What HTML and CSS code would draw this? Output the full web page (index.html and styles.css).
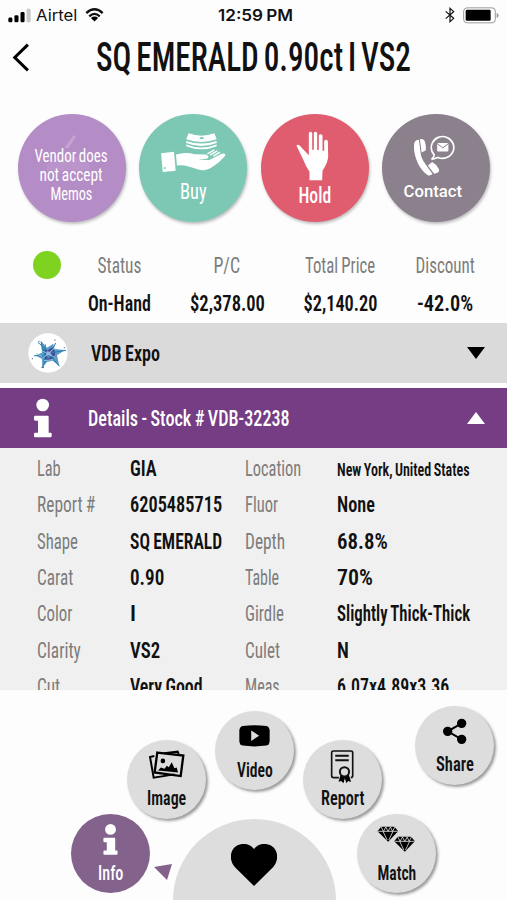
FILE: index.html
```html
<!DOCTYPE html>
<html lang="en">
<head>
    <meta charset="UTF-8">
    <meta name="viewport" content="width=device-width, initial-scale=1.0">
    <title>SQ EMERALD 0.90ct I VS2</title>
    <link rel="stylesheet" href="styles.css">
</head>
<body>
    <div class="status-bar">
        <svg class="signal" viewBox="0 0 68 44">
            <rect x="1" y="28" width="12" height="14" rx="4"/>
            <rect x="19" y="21" width="12" height="21" rx="4"/>
            <rect x="37" y="12" width="12" height="30" rx="4"/>
            <rect x="55" y="2" width="12" height="40" rx="4" fill="#c9c9c9"/>
        </svg>
        <span class="carrier fit" data-w="41">Airtel</span>
        <svg class="wifi" viewBox="0 0 58 42">
            <path d="M4 15Q29 -8 54 15M13 25Q29 10 45 25" fill="none" stroke="#111" stroke-width="7"/>
            <path d="M18 30Q29 21 40 30L29 41Z"/>
        </svg>
        <span class="clock fit" data-w="75">12:59 PM</span>
        <svg class="bluetooth" viewBox="0 0 30 46">
            <path d="M2 12L26 33L15 43V3L26 13L2 34" fill="none" stroke="#111" stroke-width="3.6"/>
        </svg>
        <svg class="battery" viewBox="0 0 108 50">
            <rect x="2" y="2" width="95" height="45" rx="10" fill="none" stroke="#9a9a9a" stroke-width="3"/>
            <rect x="8" y="8" width="75" height="33" rx="4"/>
            <path d="M101 17Q107 20 107 25T101 33Z" fill="#9a9a9a"/>
        </svg>
    </div>

    <header class="title-bar">
        <svg class="back" viewBox="0 0 54 88">
            <path d="M48 5L8 44L48 83" fill="none" stroke="#000" stroke-width="9"/>
        </svg>
        <h1><span class="fit" data-w="315">SQ EMERALD 0.90ct I VS2</span></h1>
    </header>

    <nav class="actions">
        <a class="action memo">
            <svg class="memo-mark" viewBox="0 0 150 130">
                <path d="M64 42L90 6Q98 0 98 10L76 42Z"/>
                <path d="M10 105Q10 78 50 76L80 58L140 90V110H10Z" opacity=".35"/>
            </svg>
            <span class="fit" data-w="73">Vendor does</span>
            <span class="fit" data-w="63">not accept</span>
            <span class="fit" data-w="42">Memos</span>
        </a>
        <a class="action buy">
            <svg viewBox="480 96 200 124">
                <path d="M565 100Q604 114 643 100L650 118Q604 134 558 118Z"/>
                <path d="M558 123Q604 139 650 123V129Q604 147 558 129ZM558 134Q604 152 650 134V139Q604 158 558 139Z"/>
                <ellipse cx="605" cy="114" rx="7" ry="3" fill="#7dc8b5"/>
                <path d="M482 160L521 156L526 213L487 217Z"/>
                <circle cx="493" cy="205" r="3" fill="#7dc8b5"/>
                <path d="M527 164Q555 155 583 163L618 164Q630 170 622 176L594 180L628 181L665 162Q678 158 676 168Q660 188 637 202Q622 213 600 211L568 201Q548 195 530 197Z"/>
                <path d="M630 166L652 153M640 169L660 157M622 162L643 150" fill="none" stroke="#fff" stroke-width="4"/>
            </svg>
            <span class="fit" data-w="27">Buy</span>
        </a>
        <a class="action hold">
            <svg viewBox="128 92 98 150">
                <path d="M129 136Q132 131 139 136L166 165V98Q171 91 176 98V148H181V97Q186 91 191 97V149H196V105Q201 99 207 105V151H212V122Q218 115 223 122L224 168Q224 186 207 211L206 240H168V214Q157 199 150 180Z"/>
            </svg>
            <span class="fit" data-w="33">Hold</span>
        </a>
        <a class="action contact">
            <svg viewBox="480 105 124 125">
                <path d="M483 124Q487 118 495 118L500 158Q500 174 516 194L536 222Q530 228 522 226Q504 214 492 190Q479 160 480 138Q480 128 483 124Z"/>
                <path d="M498 117Q507 114 512 121Q518 135 516 150L503 157ZM522 196L535 186Q546 192 554 205Q559 213 551 218L541 221Z"/>
                <path d="M541 164Q527 148 535 129A34 33 0 1 1 553 172L533 178Q541 171 541 164Z" fill="none" stroke="#fff" stroke-width="5"/>
                <rect x="550" y="128" width="34" height="26" rx="3"/>
                <path d="M550 130L567 143L584 130" fill="none" stroke="#8b818c" stroke-width="3"/>
            </svg>
            <span class="fit" data-w="59">Contact</span>
        </a>
    </nav>

    <section class="summary">
        <span class="dot"></span>
        <div class="stat"><span class="label fit" data-w="44">Status</span><span class="value fit" data-w="63">On-Hand</span></div>
        <div class="stat"><span class="label fit" data-w="27">P/C</span><span class="value fit" data-w="75">$2,378.00</span></div>
        <div class="stat"><span class="label fit" data-w="70">Total Price</span><span class="value fit" data-w="74">$2,140.20</span></div>
        <div class="stat"><span class="label fit" data-w="59">Discount</span><span class="value fit" data-w="56">-42.0%</span></div>
    </section>

    <section class="row vendor">
        <svg class="row-icon" viewBox="82 54 120 120">
            <circle cx="142" cy="114" r="59" fill="#fff"/>
            <path d="M121 78L139 98L158 86L161 102L193 105L169 121L176 153L156 137L139 141L125 158L124 132L105 121L124 113Z" fill="#5b9ac7"/>
            <path d="M125 102L141 106L155 97L164 112L160 129L146 136L130 133L134 119Z" fill="#424c94"/>
            <path d="M139 107L149 112L154 122L144 129L136 120Z" fill="#a3a9df"/>
            <path d="M121 80L128 113M165 84L151 113L196 106M100 122L151 124L176 154M123 159L146 119M112 82L141 108M134 88L130 142" fill="none" stroke="#2c7eae" stroke-width="3"/>
            <path d="M124 107L164 128M126 130L162 99M130 137L157 134M107 116L124 124" fill="none" stroke="#8ac7df" stroke-width="3"/>
            <g fill="#54749f"><circle cx="115" cy="79" r="2"/><circle cx="163" cy="75" r="2"/><circle cx="95" cy="131" r="2"/><circle cx="191" cy="98" r="2"/><circle cx="127" cy="157" r="3"/></g>
        </svg>
        <span class="fit" data-w="69">VDB Expo</span>
        <span class="arrow arrow-down"></span>
    </section>

    <section class="row details-head">
        <svg class="row-icon info-icon" viewBox="0 0 54 118">
            <circle cx="26" cy="20" r="19"/>
            <path d="M4 52H41Q44 52 44 56V103H50Q53 103 53 107V113Q53 117 49 117H4Q0 117 0 113V107Q0 103 4 103H12V67H4Q0 67 0 63V56Q0 52 4 52Z"/>
        </svg>
        <span class="fit" data-w="202">Details - Stock # VDB-32238</span>
        <span class="arrow arrow-up"></span>
    </section>

    <section class="details">
        <span class="label fit" data-w="24">Lab</span><span class="value fit" data-w="27">GIA</span>
        <span class="label fit" data-w="56">Location</span><span class="value small fit" data-w="133">New York, United States</span>
        <span class="label fit" data-w="58">Report #</span><span class="value fit" data-w="92">6205485715</span>
        <span class="label fit" data-w="33">Fluor</span><span class="value fit" data-w="38">None</span>
        <span class="label fit" data-w="41">Shape</span><span class="value fit" data-w="92">SQ EMERALD</span>
        <span class="label fit" data-w="40">Depth</span><span class="value fit" data-w="51">68.8%</span>
        <span class="label fit" data-w="36">Carat</span><span class="value fit" data-w="34">0.90</span>
        <span class="label fit" data-w="34">Table</span><span class="value fit" data-w="36">70%</span>
        <span class="label fit" data-w="35">Color</span><span class="value fit" data-w="6">I</span>
        <span class="label fit" data-w="39">Girdle</span><span class="value fit" data-w="133">Slightly Thick-Thick</span>
        <span class="label fit" data-w="44">Clarity</span><span class="value fit" data-w="30">VS2</span>
        <span class="label fit" data-w="35">Culet</span><span class="value fit" data-w="12">N</span>
        <span class="label fit" data-w="23">Cut</span><span class="value fit" data-w="73">Very Good</span>
        <span class="label fit" data-w="35">Meas</span><span class="value fit" data-w="112">6.07x4.89x3.36</span>
    </section>

    <nav class="wheel">
        <a class="favorite">
            <svg viewBox="0 0 138 126">
                <path d="M69 126L12 70C-6 49-3 24 11 10C28-5 54-4 69 15C84-4 110-5 127 10C141 24 144 49 126 70Z"/>
            </svg>
        </a>
        <a class="bubble bubble-info">
            <svg class="info-icon" viewBox="0 -2 44 92">
                <circle cx="22" cy="14" r="16"/>
                <path d="M3 39H34Q36 39 36 42V77H41Q43 77 43 80V86Q43 89 40 89H4Q1 89 1 86V80Q1 77 4 77H11V52H4Q1 52 1 49V42Q1 39 3 39Z"/>
            </svg>
            <span class="fit" data-w="25">Info</span>
        </a>
        <a class="bubble bubble-image">
            <svg viewBox="292 150 110 88">
                <g fill="none" stroke="#000" stroke-width="6">
                    <path d="M310 168L297 171L308 234L371 224M340 160L381 155L384 162"/>
                    <path d="M319 158L398 167L390 229L311 218Z" stroke-width="7"/>
                </g>
                <circle cx="336" cy="183" r="7"/>
                <path d="M321 212L330 203L341 207L348 198L354 202L363 187L371 205L378 203L382 218Z"/>
            </svg>
            <span class="fit" data-w="39">Image</span>
        </a>
        <a class="bubble bubble-video">
            <svg viewBox="0 0 94 66">
                <path d="M11 3Q47-2 83 3Q92 5 93 16V48Q92 60 83 62Q47 67 11 62Q2 60 1 48V16Q2 5 11 3Z"/>
                <path d="M37 16L61 32L37 48Z" fill="#ddd"/>
            </svg>
            <span class="fit" data-w="36">Video</span>
        </a>
        <a class="bubble bubble-report">
            <svg viewBox="270 146 76 104">
                <path d="M297 232H281Q275 232 275 226V156Q275 151 281 151H333Q339 151 339 156V226Q339 232 333 232" fill="none" stroke="#111" stroke-width="5"/>
                <path d="M286 165H327M286 179H327" stroke="#111" stroke-width="6"/>
                <path d="M302 224L296 244L304 242L311 249L315 234L320 249L325 242L334 245L327 222Z"/>
                <circle cx="314" cy="214" r="14" fill="#ddd" stroke="#111" stroke-width="6"/>
            </svg>
            <span class="fit" data-w="43">Report</span>
        </a>
        <a class="bubble bubble-share">
            <svg viewBox="608 54 72 78">
                <path d="M664 70L622 94L664 118" fill="none" stroke="#000" stroke-width="6"/>
                <circle cx="664" cy="70" r="14"/>
                <circle cx="622" cy="94" r="14"/>
                <circle cx="664" cy="118" r="14"/>
            </svg>
            <span class="fit" data-w="38">Share</span>
        </a>
        <a class="bubble bubble-match">
            <svg viewBox="412 376 116 78">
                <g id="gem">
                    <path d="M424 378H464L475 392L445 423L413 392Z"/>
                    <path d="M414 392H474M424 379L431 392L438 379L445 392L452 379L458 392L465 379M430 393L442 418M459 393L447 418" fill="none" stroke="#ddd" stroke-width="2.5"/>
                </g>
                <use href="#gem" x="50" y="30"/>
            </svg>
            <span class="fit" data-w="39">Match</span>
        </a>
        <svg class="pointer" viewBox="0 0 18 16"><path d="M0 3L18 0L13 16Z"/></svg>
    </nav>

    <script src="script.js"></script>
</body>
</html>
```
FILE: styles.css
```css
* {
    box-sizing: border-box;
}

body {
    margin: 0;
    width: 507px;
    height: 900px;
    overflow: hidden;
    position: relative;
    background: #fdfdfd;
    color: #111;
    font-family: Roboto, "Liberation Sans", sans-serif;
    font-stretch: 75%;
    font-size: 22.5px;
    word-spacing: -1px;
}

svg {
    display: block;
    flex: none;
}

.fit {
    display: inline-block;
    white-space: nowrap;
    transform-origin: left center;
}

/* status bar */
.status-bar {
    height: 30px;
    padding: 0 8px;
    display: grid;
    grid-template-columns: 28px 49px 133px 227px 18px 36px;
    align-items: center;
    justify-items: start;
    font-family: Inter, "Liberation Sans", sans-serif;
    font-size: 15.5px;
}

.signal {
    width: 23px;
    height: 15px;
}

.wifi {
    width: 19px;
    height: 14px;
}

.clock {
    font-weight: 600;
}

.bluetooth {
    width: 10px;
    height: 16px;
}

.battery {
    width: 36px;
    height: 17px;
}

/* title */
.title-bar {
    height: 84px;
    padding: 13px 0 0 12px;
    display: flex;
    align-items: flex-start;
}

.back {
    width: 18px;
    height: 29px;
    margin-right: 66px;
}

h1 {
    margin: 0;
    font-size: 40px;
    line-height: 29px;
    font-weight: 500;
    word-spacing: -3px;
}

/* round action buttons */
.actions {
    display: grid;
    grid-template-columns: repeat(4, 108px);
    column-gap: 13.5px;
    padding-left: 17.5px;
    height: 133px;
}

.action {
    width: 108px;
    height: 108px;
    border-radius: 50%;
    display: flex;
    flex-direction: column;
    align-items: center;
    color: #fff;
    fill: #fff;
    font-weight: 500;
    line-height: 24px;
    box-shadow: 1px 2px 3px rgba(0, 0, 0, 0.25);
}

.action .fit,
.bubble .fit,
.stat .fit {
    transform-origin: center;
}

.memo {
    background: #b58dc6;
    position: relative;
    padding-top: 32px;
    font-size: 18px;
    font-weight: 400;
    line-height: 19px;
}

.memo-mark {
    position: absolute;
    left: 25px;
    top: 20px;
    width: 50px;
    height: 43px;
    opacity: 0.2;
}

.buy {
    background: #7dc8b5;
    padding-top: 18px;
    font-weight: 400;
}

.buy svg {
    width: 67px;
    height: 41px;
    margin-bottom: 6px;
}

.hold {
    background: #e05d6f;
    padding-top: 17px;
}

.hold svg {
    width: 33px;
    height: 50px;
    margin: 0 4px 2px 0;
}

.contact {
    background: #8b818c;
    padding-top: 21px;
    font-size: 17px;
    font-stretch: 100%;
}

.contact svg {
    width: 41px;
    height: 42px;
    margin: 0 3px 2px 0;
}

.contact .fit {
    margin-right: 6px;
}

/* price summary */
.summary {
    height: 76px;
    padding: 4px 0 0 33px;
    display: grid;
    grid-template-columns: 28px 116px 100px 126px 84px;
    align-items: start;
}

.dot {
    width: 28px;
    height: 28px;
    border-radius: 50%;
    background: #7ed321;
}

.stat {
    display: flex;
    flex-direction: column;
    align-items: center;
    line-height: 28px;
    gap: 10px;
}

.label {
    color: #7c7c7c;
    font-weight: 400;
}

.value {
    font-weight: 600;
}

/* collapsible rows */
.row {
    height: 60px;
    padding: 0 22px 0 28px;
    display: flex;
    align-items: center;
}

.row-icon {
    width: 40px;
    height: 40px;
    margin-right: 23px;
}

.vendor {
    background: #dadada;
    font-weight: 600;
    margin-bottom: 5px;
}

.details-head {
    background: #753d84;
    color: #fff;
    font-weight: 500;
    padding-left: 34px;
}

.details-head .row-icon {
    width: 18px;
    height: 40px;
    margin-right: 36px;
}

.info-icon {
    fill: #fff;
}

.arrow {
    margin-left: auto;
    border: 9px solid transparent;
}

.arrow-down {
    border-width: 12px 9px 0;
    border-top-color: #000;
}

.arrow-up {
    border-width: 0 9px 12px;
    border-bottom-color: #fff;
}

/* stone details */
.details {
    height: 241.5px;
    padding: 2px 0 0 37px;
    overflow: hidden;
    background: #f0f0f0;
    display: grid;
    grid-template-columns: 93px 115px 92px 170px;
    grid-auto-rows: 36.35px;
    line-height: 36px;
    align-content: start;
    justify-items: start;
}

.small {
    font-size: 18px;
    line-height: 39px;
}

/* round menu at the bottom */
.wheel {
    position: absolute;
    left: 0;
    top: 690px;
    width: 507px;
    height: 210px;
    overflow: hidden;
}

.bubble {
    position: absolute;
    width: 79px;
    height: 79px;
    border-radius: 50%;
    display: flex;
    flex-direction: column;
    justify-content: space-between;
    align-items: center;
    background: #ddd;
    font-size: 20px;
    font-weight: 600;
    line-height: 20px;
    box-shadow: 2px 2px 3px rgba(0, 0, 0, 0.4);
}

.bubble-info {
    left: 71px;
    top: 124px;
    padding: 10px 0 10px;
    background: #83628c;
    color: #fff;
    font-weight: 500;
    box-shadow: none;
}

.bubble-info svg {
    width: 15px;
    height: 31px;
}

.bubble-image {
    left: 127px;
    top: 50px;
    padding: 10px 0 11px;
}

.bubble-image svg {
    width: 37px;
    height: 29px;
}

.bubble-video {
    left: 215px;
    top: 21px;
    padding: 14px 0 10px;
}

.bubble-video svg {
    width: 31px;
    height: 22px;
}

.bubble-report {
    left: 303px;
    top: 50px;
    padding: 9px 0 11px;
}

.bubble-report svg {
    width: 25px;
    height: 35px;
}

.bubble-share {
    left: 415px;
    top: 16px;
    padding: 12px 0 11px;
}

.bubble-share svg {
    width: 24px;
    height: 26px;
}

.bubble-match {
    left: 357px;
    top: 124px;
    padding: 12px 0 10px;
}

.bubble-match svg {
    width: 39px;
    height: 26px;
}

.favorite {
    position: absolute;
    left: 173px;
    top: 129px;
    width: 163px;
    height: 163px;
    border-radius: 50%;
    background: #ddd;
    padding: 25px 0 0 58px;
}

.favorite svg {
    width: 46px;
    height: 42px;
}

.pointer {
    position: absolute;
    left: 154px;
    top: 174px;
    width: 18px;
    height: 16px;
    fill: #83628c;
}
```
FILE: script.js
```js
// squeeze every label to its condensed width
document.querySelectorAll('.fit').forEach(el => {
    const scale = el.dataset.w / el.offsetWidth;
    el.style.transform = `scaleX(${scale})`;
});
```
